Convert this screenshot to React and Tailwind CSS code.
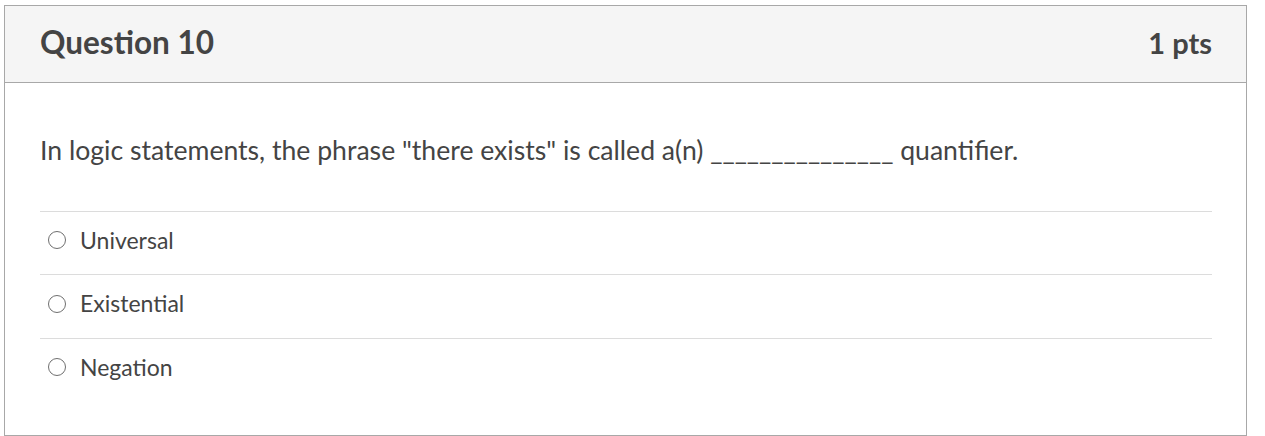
const options = ["Universal", "Existential", "Negation"]

function Radio() {
  return (
    <span className="inline-block w-[18px] h-[18px] rounded-full border-[1.5px] border-[#6f6f6f] bg-white shrink-0"></span>
  )
}

export default function App() {
  return (
    <div className="bg-white w-[1265px] h-[436px] pt-[5px] pl-[4px] font-['Lato','Open_Sans',sans-serif] text-[#444444]">
      <div className="w-[1243px] h-[431px] border border-[#a8a8a8] flex flex-col">
        <div className="h-[77px] bg-[#f5f5f5] border-b border-[#a8a8a8] flex items-center justify-between pl-[35px] pr-[34px]">
          <h2 className="text-[31.5px] font-bold leading-none -mt-[3px]">Question 10</h2>
          <span className="text-[29px] font-bold leading-none -mt-[3px]">1 pts</span>
        </div>
        <div className="px-[35px] pr-[34px]">
          <p className="text-[26.6px] leading-none mt-[54px] mb-[47px]">
            In logic statements, the phrase "there exists" is called a(n) _______________ quantifier.
          </p>
          {options.map(function (opt) {
            return (
              <div key={opt} className="border-t border-[#dcdcdc] h-[63.5px] flex items-center gap-[14px] pl-[8px] pb-[5px]">
                <Radio />
                <span className="text-[23px] leading-none">{opt}</span>
              </div>
            )
          })}
        </div>
      </div>
    </div>
  )
}
